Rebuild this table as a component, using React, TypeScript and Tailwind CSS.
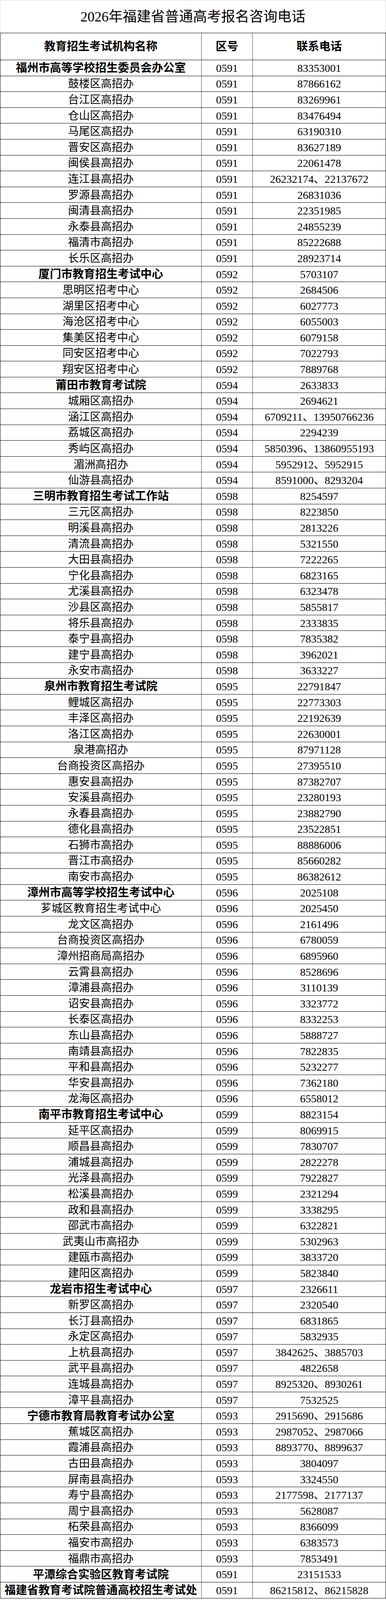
type Row = { name: string; code: string; tel: string; head?: boolean };

const rows: Row[] = [
  { name: "福州市高等学校招生委员会办公室", code: "0591", tel: "83353001", head: true },
  { name: "鼓楼区高招办", code: "0591", tel: "87866162" },
  { name: "台江区高招办", code: "0591", tel: "83269961" },
  { name: "仓山区高招办", code: "0591", tel: "83476494" },
  { name: "马尾区高招办", code: "0591", tel: "63190310" },
  { name: "晋安区高招办", code: "0591", tel: "83627189" },
  { name: "闽侯县高招办", code: "0591", tel: "22061478" },
  { name: "连江县高招办", code: "0591", tel: "26232174、22137672" },
  { name: "罗源县高招办", code: "0591", tel: "26831036" },
  { name: "闽清县高招办", code: "0591", tel: "22351985" },
  { name: "永泰县高招办", code: "0591", tel: "24855239" },
  { name: "福清市高招办", code: "0591", tel: "85222688" },
  { name: "长乐区高招办", code: "0591", tel: "28923714" },
  { name: "厦门市教育招生考试中心", code: "0592", tel: "5703107", head: true },
  { name: "思明区招考中心", code: "0592", tel: "2684506" },
  { name: "湖里区招考中心", code: "0592", tel: "6027773" },
  { name: "海沧区招考中心", code: "0592", tel: "6055003" },
  { name: "集美区招考中心", code: "0592", tel: "6079158" },
  { name: "同安区招考中心", code: "0592", tel: "7022793" },
  { name: "翔安区招考中心", code: "0592", tel: "7889768" },
  { name: "莆田市教育考试院", code: "0594", tel: "2633833", head: true },
  { name: "城厢区高招办", code: "0594", tel: "2694621" },
  { name: "涵江区高招办", code: "0594", tel: "6709211、13950766236" },
  { name: "荔城区高招办", code: "0594", tel: "2294239" },
  { name: "秀屿区高招办", code: "0594", tel: "5850396、13860955193" },
  { name: "湄洲高招办", code: "0594", tel: "5952912、5952915" },
  { name: "仙游县高招办", code: "0594", tel: "8591000、8293204" },
  { name: "三明市教育招生考试工作站", code: "0598", tel: "8254597", head: true },
  { name: "三元区高招办", code: "0598", tel: "8223850" },
  { name: "明溪县高招办", code: "0598", tel: "2813226" },
  { name: "清流县高招办", code: "0598", tel: "5321550" },
  { name: "大田县高招办", code: "0598", tel: "7222265" },
  { name: "宁化县高招办", code: "0598", tel: "6823165" },
  { name: "尤溪县高招办", code: "0598", tel: "6323478" },
  { name: "沙县区高招办", code: "0598", tel: "5855817" },
  { name: "将乐县高招办", code: "0598", tel: "2333835" },
  { name: "泰宁县高招办", code: "0598", tel: "7835382" },
  { name: "建宁县高招办", code: "0598", tel: "3962021" },
  { name: "永安市高招办", code: "0598", tel: "3633227" },
  { name: "泉州市教育招生考试院", code: "0595", tel: "22791847", head: true },
  { name: "鲤城区高招办", code: "0595", tel: "22773303" },
  { name: "丰泽区高招办", code: "0595", tel: "22192639" },
  { name: "洛江区高招办", code: "0595", tel: "22630001" },
  { name: "泉港高招办", code: "0595", tel: "87971128" },
  { name: "台商投资区高招办", code: "0595", tel: "27395510" },
  { name: "惠安县高招办", code: "0595", tel: "87382707" },
  { name: "安溪县高招办", code: "0595", tel: "23280193" },
  { name: "永春县高招办", code: "0595", tel: "23882790" },
  { name: "德化县高招办", code: "0595", tel: "23522851" },
  { name: "石狮市高招办", code: "0595", tel: "88886006" },
  { name: "晋江市高招办", code: "0595", tel: "85660282" },
  { name: "南安市高招办", code: "0595", tel: "86382612" },
  { name: "漳州市高等学校招生考试中心", code: "0596", tel: "2025108", head: true },
  { name: "芗城区教育招生考试中心", code: "0596", tel: "2025450" },
  { name: "龙文区高招办", code: "0596", tel: "2161496" },
  { name: "台商投资区高招办", code: "0596", tel: "6780059" },
  { name: "漳州招商局高招办", code: "0596", tel: "6895960" },
  { name: "云霄县高招办", code: "0596", tel: "8528696" },
  { name: "漳浦县高招办", code: "0596", tel: "3110139" },
  { name: "诏安县高招办", code: "0596", tel: "3323772" },
  { name: "长泰区高招办", code: "0596", tel: "8332253" },
  { name: "东山县高招办", code: "0596", tel: "5888727" },
  { name: "南靖县高招办", code: "0596", tel: "7822835" },
  { name: "平和县高招办", code: "0596", tel: "5232277" },
  { name: "华安县高招办", code: "0596", tel: "7362180" },
  { name: "龙海区高招办", code: "0596", tel: "6558012" },
  { name: "南平市教育招生考试中心", code: "0599", tel: "8823154", head: true },
  { name: "延平区高招办", code: "0599", tel: "8069915" },
  { name: "顺昌县高招办", code: "0599", tel: "7830707" },
  { name: "浦城县高招办", code: "0599", tel: "2822278" },
  { name: "光泽县高招办", code: "0599", tel: "7922827" },
  { name: "松溪县高招办", code: "0599", tel: "2321294" },
  { name: "政和县高招办", code: "0599", tel: "3338295" },
  { name: "邵武市高招办", code: "0599", tel: "6322821" },
  { name: "武夷山市高招办", code: "0599", tel: "5302963" },
  { name: "建瓯市高招办", code: "0599", tel: "3833720" },
  { name: "建阳区高招办", code: "0599", tel: "5823840" },
  { name: "龙岩市招生考试中心", code: "0597", tel: "2326611", head: true },
  { name: "新罗区高招办", code: "0597", tel: "2320540" },
  { name: "长汀县高招办", code: "0597", tel: "6831865" },
  { name: "永定区高招办", code: "0597", tel: "5832935" },
  { name: "上杭县高招办", code: "0597", tel: "3842625、3885703" },
  { name: "武平县高招办", code: "0597", tel: "4822658" },
  { name: "连城县高招办", code: "0597", tel: "8925320、8930261" },
  { name: "漳平县高招办", code: "0597", tel: "7532525" },
  { name: "宁德市教育局教育考试办公室", code: "0593", tel: "2915690、2915686", head: true },
  { name: "蕉城区高招办", code: "0593", tel: "2987052、2987066" },
  { name: "霞浦县高招办", code: "0593", tel: "8893770、8899637" },
  { name: "古田县高招办", code: "0593", tel: "3804097" },
  { name: "屏南县高招办", code: "0593", tel: "3324550" },
  { name: "寿宁县高招办", code: "0593", tel: "2177598、2177137" },
  { name: "周宁县高招办", code: "0593", tel: "5628087" },
  { name: "柘荣县高招办", code: "0593", tel: "8366099" },
  { name: "福安市高招办", code: "0593", tel: "6383573" },
  { name: "福鼎市高招办", code: "0593", tel: "7853491" },
  { name: "平潭综合实验区教育考试院", code: "0591", tel: "23151533", head: true },
  { name: "福建省教育考试院普通高校招生考试处", code: "0591", tel: "86215812、86215828", head: true },
];

export default function App() {
  return (
    <div className="w-[988px] bg-white text-black font-['Liberation_Serif','Noto_Sans_CJK_SC',serif]">
      {/* Title */}
      <div className="h-[84px] flex items-center justify-center border-t border-l border-r border-gray-300 text-[36px] leading-none">
        2026年福建省普通高考报名咨询电话
      </div>

      {/* Table */}
      <div className="border-l border-r border-black">
        <div className="grid grid-cols-[515px_131px_1fr] h-[70px] border-t border-b border-black text-[29px] leading-none font-bold">
          <div className="flex items-center justify-center border-r border-gray-700">教育招生考试机构名称</div>
          <div className="flex items-center justify-center border-r border-gray-700">区号</div>
          <div className="flex items-center justify-center">联系电话</div>
        </div>

        {rows.map((r, i) => (
          <div key={i} className="grid grid-cols-[515px_131px_1fr] h-[40.6px] border-b border-black text-[28px] leading-none">
            <div
              className={
                r.head
                  ? "flex items-center justify-center pt-[2px] border-r border-gray-700 text-[29px] font-bold whitespace-nowrap"
                  : "flex items-center justify-center pt-[2px] border-r border-gray-700 whitespace-nowrap"
              }
            >
              {r.name}
            </div>
            <div className="flex items-center justify-center pt-[2px] border-r border-gray-700">{r.code}</div>
            <div className="flex items-center justify-center pt-[2px] whitespace-nowrap">{r.tel}</div>
          </div>
        ))}
      </div>
    </div>
  );
}
